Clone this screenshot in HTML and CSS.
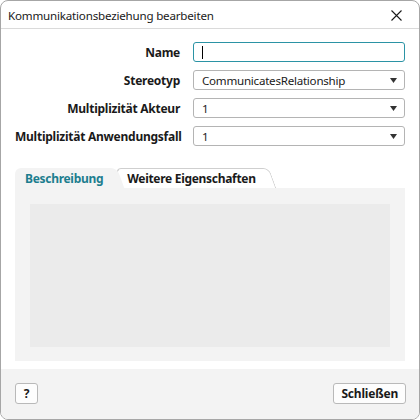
FILE: index.html
```html
<!DOCTYPE html>
<html lang="de">
<head>
<meta charset="utf-8">
<link rel="stylesheet" href="styles.css">
</head>
<body>
<div class="window">
  <div class="titlebar">
    <span class="title">Kommunikationsbeziehung bearbeiten</span>
    <svg class="close" width="11" height="11" viewBox="0 0 11 11"><path d="M0.5 0.5 L10.5 10.5 M10.5 0.5 L0.5 10.5" stroke="#1a1a1a" stroke-width="1.1" fill="none"/></svg>
  </div>
  <div class="content">
    <div class="form">
      <label class="lbl">Name</label>
      <div class="field focused"><span class="caret"></span></div>
      <label class="lbl">Stereotyp</label>
      <div class="field select"><span class="val">CommunicatesRelationship</span><svg class="arrow" width="7" height="5" viewBox="0 0 7 5"><path d="M0 0 H7 L3.5 5 Z" fill="#333"/></svg></div>
      <label class="lbl">Multiplizität Akteur</label>
      <div class="field select"><span class="val">1</span><svg class="arrow" width="7" height="5" viewBox="0 0 7 5"><path d="M0 0 H7 L3.5 5 Z" fill="#333"/></svg></div>
      <label class="lbl">Multiplizität Anwendungsfall</label>
      <div class="field select"><span class="val">1</span><svg class="arrow" width="7" height="5" viewBox="0 0 7 5"><path d="M0 0 H7 L3.5 5 Z" fill="#333"/></svg></div>
    </div>
    <div class="tabs">
      <div class="tab active">Beschreibung</div>
      <div class="tab other">Weitere Eigenschaften</div>
    </div>
    <div class="panel">
      <div class="textarea"></div>
    </div>
  </div>
  <div class="footer">
    <button class="btn help">?</button>
    <button class="btn">Schließen</button>
  </div>
</div>
</body>
</html>
```
FILE: styles.css
```css
html, body {
  margin: 0;
  padding: 0;
  background: #ffffff;
}
body {
  font-family: "Noto Sans", "Open Sans", sans-serif;
  font-size: 12px;
  color: #1a1a1a;
}
.window {
  width: 420px;
  height: 420px;
  box-sizing: border-box;
  border: 1px solid #a6a6a6;
  border-radius: 8px;
  overflow: hidden;
  display: flex;
  flex-direction: column;
  background: #ffffff;
}
.titlebar {
  height: 27px;
  border-bottom: 1px solid #dadada;
  display: flex;
  align-items: center;
  justify-content: space-between;
  padding: 0 17px 0 7px;
  flex: none;
}
.title {
  font-size: 11.6px;
  letter-spacing: -0.2px;
  padding-top: 1px;
}
.close {
  display: block;
  margin-top: 1px;
}
.content {
  flex: 1;
  display: flex;
  flex-direction: column;
  padding: 13px 14px 8px 14px;
}
.form {
  display: grid;
  grid-template-columns: 165px 1fr;
  column-gap: 13px;
  row-gap: 8px;
  align-items: center;
}
.lbl {
  text-align: right;
  font-weight: 700;
  font-size: 12px;
  letter-spacing: -0.25px;
  white-space: nowrap;
}
.field {
  height: 20px;
  box-sizing: border-box;
  border: 1px solid #b4b4b4;
  border-radius: 3px;
  background: #ffffff;
  display: flex;
  align-items: center;
  padding: 0 7px 0 8px;
}
.field.focused {
  border-color: #2b93a5;
}
.caret {
  width: 1px;
  height: 13px;
  background: #000;
}
.select {
  justify-content: space-between;
}
.val {
  font-size: 11.6px;
  letter-spacing: -0.25px;
}
.arrow {
  display: block;
}
.tabs {
  margin-top: 22px;
  display: flex;
  height: 20px;
}
.tab {
  position: relative;
  height: 20px;
  display: flex;
  align-items: center;
  font-weight: 700;
  font-size: 12px;
  letter-spacing: -0.3px;
  white-space: nowrap;
}
.tab.active {
  color: #1c7d8e;
  padding: 0 14px 0 10px;
  z-index: 2;
}
.tab.active::before {
  content: "";
  position: absolute;
  left: 0;
  top: 0;
  bottom: 0;
  width: 60%;
  background: #f3f3f3;
  border-top-left-radius: 6px;
  z-index: -1;
}
.tab.active::after {
  content: "";
  position: absolute;
  left: 40%;
  right: 0;
  top: 0;
  bottom: 0;
  background: #f3f3f3;
  border-top-right-radius: 6px;
  transform: skewX(20deg);
  transform-origin: top;
  z-index: -1;
}
.tab.other {
  color: #1a1a1a;
  padding: 0 14px 0 12px;
  margin-left: -2px;
  z-index: 1;
}
.tab.other::before {
  content: "";
  position: absolute;
  left: 0;
  right: 0;
  top: 0;
  bottom: 0;
  background: #ffffff;
  border: 1px solid #cfcfcf;
  border-bottom: none;
  border-radius: 6px 6px 0 0;
  transform: skewX(20deg);
  transform-origin: top;
  z-index: -1;
}
.panel {
  flex: 1;
  background: #f3f3f3;
  padding: 16px 15px 14px 15px;
  display: flex;
}
.textarea {
  flex: 1;
  background: #ebebeb;
}
.footer {
  height: 48px;
  flex: none;
  background: #f3f3f3;
  display: flex;
  align-items: center;
  justify-content: space-between;
  padding: 0 13px 2px 14px;
}
.btn {
  font-family: "Noto Sans", "Open Sans", sans-serif;
  font-size: 12px;
  font-weight: 700;
  letter-spacing: -0.2px;
  color: #1a1a1a;
  height: 21px;
  box-sizing: border-box;
  background: #fdfdfd;
  border: 1px solid #b9b9b9;
  border-radius: 3px;
  padding: 0 7px;
  display: flex;
  align-items: center;
}
.btn.help {
  width: 23px;
  justify-content: center;
  padding: 0;
}
```
